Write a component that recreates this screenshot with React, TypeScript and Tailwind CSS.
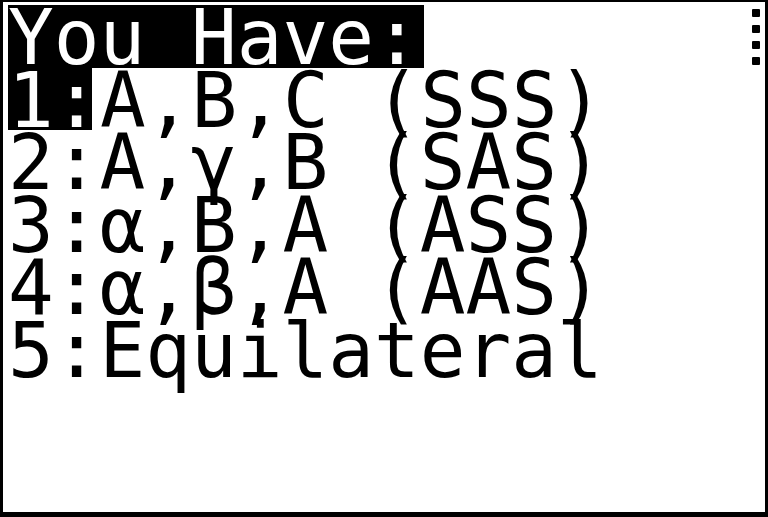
const font = { fontFamily: '"DejaVu Sans Mono", "Liberation Mono", monospace' };

const rows = ['A,γ,B (SAS)', 'α,B,A (ASS)', 'α,β,A (AAS)', 'Equilateral'];

function MoreDots() {
  return (
    <div className="flex flex-col gap-[8px] pt-[4px] pr-[5px]">
      <div className="w-[8px] h-[8px] bg-black rounded-[1px]" />
      <div className="w-[8px] h-[8px] bg-black rounded-[1px]" />
      <div className="w-[8px] h-[8px] bg-black rounded-[1px]" />
      <div className="w-[8px] h-[8px] bg-black rounded-[1px]" />
    </div>
  );
}

export default function App() {
  return (
    <div
      className="w-[768px] h-[517px] bg-white border-black border-t-2 border-l-[3px] border-r-[3px] border-b-[5px] pt-[3px] pl-[5px] text-black overflow-hidden"
      style={font}
    >
      {/* title row */}
      <div className="flex justify-between h-[62.5px]">
        <div className="w-[416px] h-full pt-[4px] bg-black text-white text-[76px] leading-[58.5px] whitespace-pre">
          You Have:
        </div>
        <MoreDots />
      </div>

      {/* option 1, selected */}
      <div className="flex h-[62.5px] text-[76px] leading-[58.5px] whitespace-pre">
        <div className="w-[84px] h-full pt-[4px] bg-black text-white">1:</div>
        <div className="ml-[8px] pt-[4px]">A,B,C (SSS)</div>
      </div>

      {rows.map((r, i) => (
        <div key={i} className="h-[62.5px] pt-[4px] text-[76px] leading-[58.5px] whitespace-pre">
          {i + 2}:{r}
        </div>
      ))}
    </div>
  );
}
